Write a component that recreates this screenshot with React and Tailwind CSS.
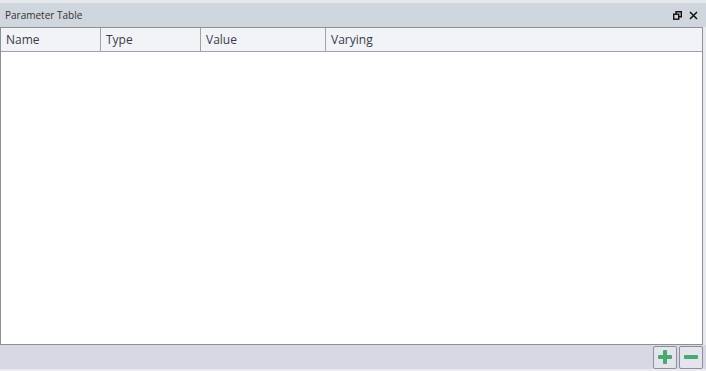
import { useState } from 'react'

const COLUMNS = [
  { name: 'Name', width: 'w-[100px]' },
  { name: 'Type', width: 'w-[100px]' },
  { name: 'Value', width: 'w-[125px]' },
  { name: 'Varying', width: 'flex-1' },
]

function RestoreIcon() {
  return (
    <svg className="w-[9px] h-[9px]" viewBox="0 0 9 9" fill="none" stroke="#111" strokeWidth="1.4">
      <rect x="0.7" y="3.2" width="5" height="5" />
      <path d="M3 3.2V0.7h5.3v5H5.7" />
    </svg>
  )
}

function CloseIcon() {
  return (
    <svg className="w-[9px] h-[9px]" viewBox="0 0 9 9" fill="none" stroke="#111" strokeWidth="1.5">
      <path d="M1 1l7 7M8 1L1 8" />
    </svg>
  )
}

export default function App() {
  const [rows] = useState([])

  return (
    <div className="w-[706px] h-[371px] flex flex-col bg-[#e9eaee] font-['Segoe_UI','Open_Sans',sans-serif] text-[#222]">
      <div className="h-[3px] bg-[#e6e8ec]" />
      {/* Title bar */}
      <div className="h-[24px] flex items-center justify-between bg-[#cfd6de] pl-[5px] pr-[8px]">
        <span className="text-[10px] text-[#333]">Parameter Table</span>
        <div className="flex items-center gap-[7px]">
          <RestoreIcon />
          <CloseIcon />
        </div>
      </div>

      {/* Table */}
      <div className="flex-1 flex flex-col bg-white border border-[#8c9099] mr-[3px] min-h-0">
        <div className="h-[24px] flex bg-[#f1f3f6] border-b border-[#9ea3ab]">
          {COLUMNS.map((c, i) => (
            <div
              key={c.name}
              className={`${c.width} flex items-center pl-[5px] text-[12px] text-[#3a3a4a] ${i < COLUMNS.length - 1 ? 'border-r border-[#9ea3ab]' : ''}`}
            >
              {c.name}
            </div>
          ))}
        </div>
        <div className="flex-1">
          {rows.map((r) => (
            <div key={r.name}>{r.name}</div>
          ))}
        </div>
      </div>

      {/* Footer */}
      <div className="h-[24px] flex items-center justify-end gap-[2px] bg-[#d8d8e4] pr-[3px]">
        <button className="w-[24px] h-[23px] flex items-center justify-center bg-[#e4e4ec] border border-[#8c9099] rounded-[2px]">
          <svg className="w-[16px] h-[16px]" viewBox="0 0 16 16" fill="#4aa872">
            <rect x="6" y="1" width="4" height="14" rx="1" />
            <rect x="1" y="6" width="14" height="4" rx="1" />
          </svg>
        </button>
        <button className="w-[24px] h-[23px] flex items-center justify-center bg-[#e4e4ec] border border-[#8c9099] rounded-[2px]">
          <svg className="w-[16px] h-[16px]" viewBox="0 0 16 16" fill="#4aa872">
            <rect x="1" y="6" width="14" height="4" rx="1" />
          </svg>
        </button>
      </div>
      <div className="h-[2px] bg-[#eaeaf0]" />
    </div>
  )
}
